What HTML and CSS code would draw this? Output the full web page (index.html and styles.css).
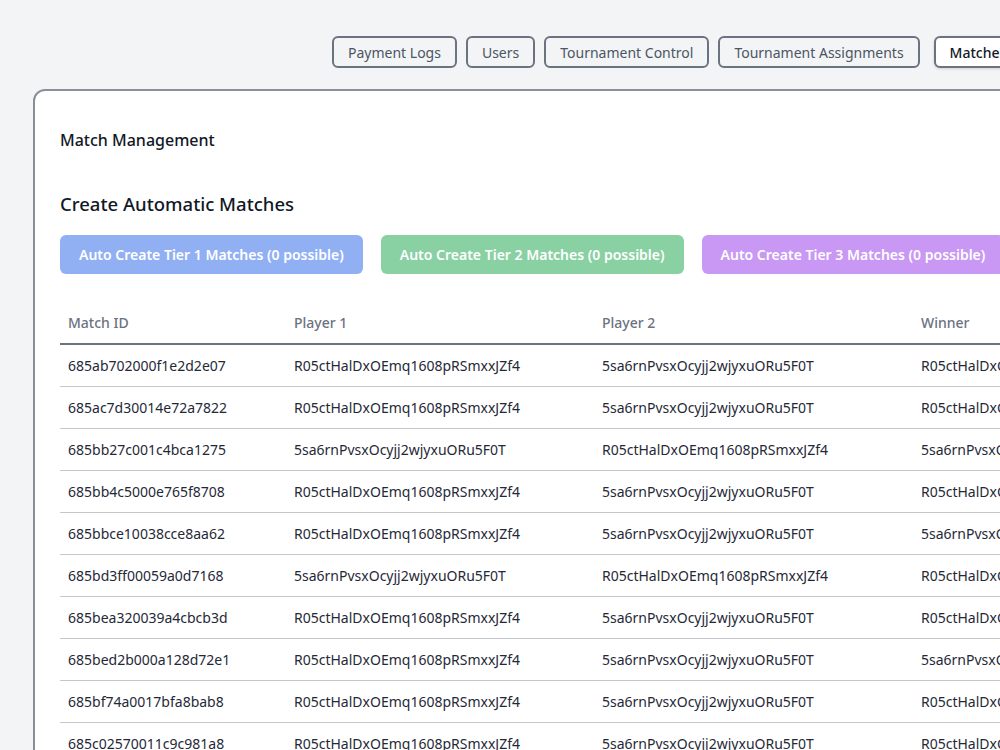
FILE: index.html
```html
<!DOCTYPE html>
<html lang="en">
    <head>
        <meta charset="UTF-8" />
        <meta name="viewport" content="width=device-width, initial-scale=1.0" />
        <title>Admin - Matches</title>
        <link rel="stylesheet" href="styles.css">
    </head>
    <body>
        <div class="page">
            <nav class="tabs">
                <button class="tab">Payment Logs</button>
                <button class="tab">Users</button>
                <button class="tab">Tournament Control</button>
                <button class="tab">Tournament Assignments</button>
                <button class="tab active">Matches</button>
                <button class="tab">Settings</button>
            </nav>

            <div class="card">
                <h2 class="card-title">Match Management</h2>

                <h3 class="section-title">Create Automatic Matches</h3>
                <div class="auto-buttons">
                    <button class="auto-btn tier1" disabled>Auto Create Tier 1 Matches (0 possible)</button>
                    <button class="auto-btn tier2" disabled>Auto Create Tier 2 Matches (0 possible)</button>
                    <button class="auto-btn tier3" disabled>Auto Create Tier 3 Matches (0 possible)</button>
                </div>

                <table class="matches">
                    <thead>
                        <tr>
                            <th class="col-id">Match ID</th>
                            <th class="col-p1">Player 1</th>
                            <th class="col-p2">Player 2</th>
                            <th class="col-win">Winner</th>
                            <th>Tier</th>
                            <th>Status</th>
                        </tr>
                    </thead>
                    <tbody id="match-rows"></tbody>
                </table>
            </div>
        </div>

        <script>
            const A = "R05ctHalDxOEmq1608pRSmxxJZf4";
            const B = "5sa6rnPvsxOcyjj2wjyxuORu5F0T";

            const matches = [
                ["685ab702000f1e2d2e07", A, B, A],
                ["685ac7d30014e72a7822", A, B, A],
                ["685bb27c001c4bca1275", B, A, B],
                ["685bb4c5000e765f8708", A, B, A],
                ["685bbce10038cce8aa62", A, B, B],
                ["685bd3ff00059a0d7168", B, A, A],
                ["685bea320039a4cbcb3d", A, B, A],
                ["685bed2b000a128d72e1", A, B, B],
                ["685bf74a0017bfa8bab8", A, B, A],
                ["685c02570011c9c981a8", A, B, A],
                ["685c0a91002e4b7f19c3", B, A, B]
            ];

            const tbody = document.getElementById("match-rows");
            matches.forEach((m) => {
                const tr = document.createElement("tr");
                m.concat(["1", "Completed"]).forEach((value) => {
                    const td = document.createElement("td");
                    td.textContent = value;
                    tr.appendChild(td);
                });
                tbody.appendChild(tr);
            });
        </script>
    </body>
</html>
```

FILE: styles.css
```css
body {
    font-family: "Noto Sans", "Open Sans", sans-serif;
    background-color: #f3f4f6;
    color: #111827;
    margin: 0;
    overflow: hidden;
}
.page {
    width: 1400px;
    padding: 36px 0 0 33px;
}
.tabs {
    display: flex;
    gap: 9px;
    padding-left: 299px;
    margin-bottom: 21px;
}
.tab {
    font-family: inherit;
    font-size: 14px;
    height: 32px;
    padding: 0 14px;
    background-color: #f3f4f6;
    color: #4b5563;
    border: 2px solid #6b7280;
    border-radius: 6px;
    white-space: nowrap;
    cursor: pointer;
}
.tab.active {
    background-color: #fff;
    color: #111827;
    font-weight: 500;
    margin-left: 5px;
    box-shadow: 0 1px 3px rgba(0, 0, 0, 0.15);
}
.card {
    background-color: #fff;
    border: 2px solid #8a8f98;
    border-radius: 12px;
    padding: 38px 25px 0;
    min-height: 800px;
}
.card-title {
    font-size: 16px;
    font-weight: 500;
    margin: 0 0 40px;
}
.section-title {
    font-size: 18.5px;
    font-weight: 500;
    margin: 0 0 19px;
}
.auto-buttons {
    display: flex;
    gap: 18px;
    margin-bottom: 27px;
}
.auto-btn {
    font-family: inherit;
    font-size: 14px;
    font-weight: 600;
    color: #fff;
    height: 39px;
    padding: 0 19px;
    border: none;
    border-radius: 6px;
    white-space: nowrap;
}
.auto-btn:disabled {
    opacity: 0.5;
}
.tier1 {
    background-color: #2563eb;
}
.tier2 {
    background-color: #16a34a;
}
.tier3 {
    background-color: #9333ea;
}
.matches {
    border-collapse: collapse;
    font-size: 14px;
    text-align: left;
}
.matches th {
    color: #6b7280;
    font-weight: 500;
    padding: 0 8px;
    height: 42px;
    border-bottom: 2px solid #6b7280;
}
.matches td {
    color: #1f2937;
    padding: 0 8px;
    height: 41px;
    border-bottom: 1px solid #c4c8ce;
    white-space: nowrap;
}
.col-id {
    width: 210px;
}
.col-p1 {
    width: 292px;
}
.col-p2 {
    width: 303px;
}
.col-win {
    width: 292px;
}
```
